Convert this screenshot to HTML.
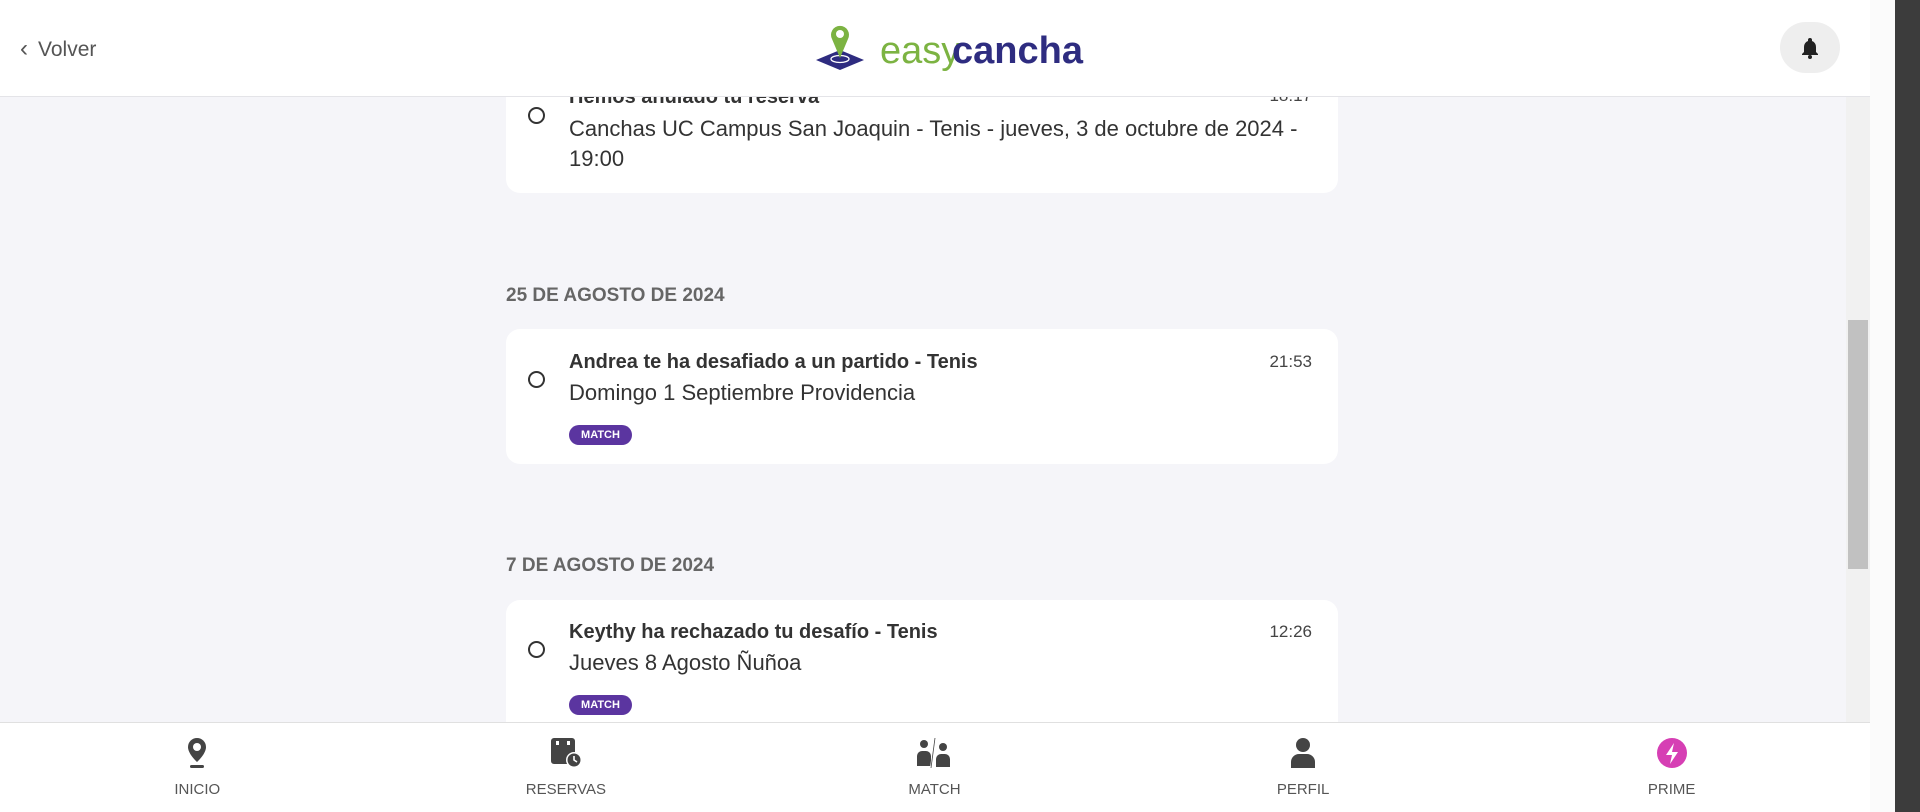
<!DOCTYPE html>
<html><head><meta charset="utf-8"><style>
*{margin:0;padding:0;box-sizing:border-box}
body{width:1920px;height:812px;overflow:hidden;background:#f5f5f9;font-family:"Liberation Sans",sans-serif;color:#333;position:relative}
.hdr{position:absolute;left:0;top:0;width:1870px;height:97px;background:#fff;border-bottom:1px solid #e4e4e8;z-index:5}
.back{position:absolute;left:20px;top:35px;font-size:21px;color:#555}
.bell{position:absolute;left:1780px;top:22px;width:60px;height:51px;border-radius:26px;background:#eee}
.card{position:absolute;left:506px;width:832px;background:#fff;border-radius:14px}
.rad{position:absolute;left:528px;width:17px;height:17px;border:2.5px solid #333;border-radius:50%}
.t{position:absolute;left:569px;font-size:20px;font-weight:bold;color:#333}
.b{position:absolute;left:569px;font-size:22px;color:#333;line-height:30px}
.tm{position:absolute;left:1266px;width:46px;text-align:right;font-size:17px;color:#444}
.badge{position:absolute;left:569px;width:63px;height:20px;border-radius:10px;background:#5b35a0;color:#fff;font-size:11px;font-weight:bold;text-align:center;line-height:20px}
.dh{position:absolute;left:506px;font-size:19px;font-weight:bold;color:#666}
.navbg{position:absolute;left:0;top:722px;width:1870px;height:90px;background:#fff;border-top:1px solid #e0e0e0;z-index:5}
.nav{position:absolute;left:13px;top:722px;width:1843px;height:90px;display:flex;z-index:6}
.nav div{flex:1;text-align:center;font-size:15px;color:#555;padding-top:14px}
.nav svg{display:block;margin:0 auto 11px}
.sb{position:absolute;left:1846px;top:97px;width:24px;height:625px;background:#f1f1f1}
.thumb{position:absolute;left:1848px;top:320px;width:20px;height:249px;background:#c1c1c1}
.sb2{position:absolute;left:1870px;top:0;width:25px;height:812px;background:#fbfbfb}
.dark{position:absolute;left:1895px;top:0;width:25px;height:812px;background:#3c3c3c}
</style></head><body>
<div class="hdr">
<div class="back"><span style="font-size:24px;margin-right:10px">&#8249;</span>Volver</div>
<svg style="position:absolute;left:816px;top:22px" width="274" height="50" viewBox="0 0 274 50">
<polygon points="0,38 24,28 48,38 24,48" fill="#2e2c80"/>
<ellipse cx="24" cy="37" rx="9" ry="3.5" fill="none" stroke="#fff" stroke-width="1.3"/>
<path d="M24 36 L16 17 A9 9 0 1 1 32 17 Z" fill="#7cb342"/>
<circle cx="24" cy="12" r="4" fill="#fff"/>
<text x="64" y="41" font-family="Liberation Sans" font-size="38" fill="#7cb342">easy</text>
<text x="136" y="41" font-family="Liberation Sans" font-size="38" font-weight="bold" fill="#2e2c80">cancha</text>
</svg>
<div class="bell"><svg style="position:absolute;left:20px;top:15px" width="20" height="22" viewBox="0 0 20 22"><path d="M10 1a2 2 0 0 1 2 2v1a6 6 0 0 1 4 6v5l2 2v1H2v-1l2-2v-5a6 6 0 0 1 4-6V3a2 2 0 0 1 2-2z" fill="#222"/><circle cx="10" cy="20" r="2" fill="#222"/></svg></div>
</div>

<div class="card" style="top:60px;height:133px"></div>
<div class="t" style="top:86px">Hemos anulado tu reserva</div>
<div class="tm" style="top:86px">18:17</div>
<div class="rad" style="top:107px"></div>
<div class="b" style="top:114px">Canchas UC Campus San Joaquin - Tenis - jueves, 3 de octubre de 2024 -<br>19:00</div>

<div class="dh" style="top:285px">25 DE AGOSTO DE 2024</div>
<div class="card" style="top:329px;height:135px"></div>
<div class="t" style="top:351px">Andrea te ha desafiado a un partido - Tenis</div>
<div class="tm" style="top:352px">21:53</div>
<div class="rad" style="top:371px"></div>
<div class="b" style="top:378px">Domingo 1 Septiembre Providencia</div>
<div class="badge" style="top:425px">MATCH</div>

<div class="dh" style="top:555px">7 DE AGOSTO DE 2024</div>
<div class="card" style="top:600px;height:135px"></div>
<div class="t" style="top:621px">Keythy ha rechazado tu desafío - Tenis</div>
<div class="tm" style="top:622px">12:26</div>
<div class="rad" style="top:641px"></div>
<div class="b" style="top:648px">Jueves 8 Agosto Ñuñoa</div>
<div class="badge" style="top:695px">MATCH</div>

<div class="sb"></div><div class="thumb"></div>
<div class="sb2"></div><div class="dark"></div>

<div class="navbg"></div>
<div class="nav">
<div><svg width="30" height="34" viewBox="0 0 30 34"><path d="M15 2a9 9 0 0 0-9 9c0 7 9 15 9 15s9-8 9-15a9 9 0 0 0-9-9z" fill="#444"/><circle cx="15" cy="11" r="4" fill="#fff"/><rect x="8" y="29" width="14" height="3" rx="1.5" fill="#444"/></svg>INICIO</div>
<div><svg width="36" height="34" viewBox="0 0 36 34"><rect x="3" y="2" width="24" height="26" rx="3" fill="#444"/><rect x="8" y="5" width="3" height="4" fill="#fff"/><rect x="19" y="5" width="3" height="4" fill="#fff"/><circle cx="26" cy="24" r="8" fill="#fff"/><circle cx="26" cy="24" r="6.5" fill="#444"/><path d="M26 20v4l3 2" stroke="#fff" stroke-width="1.6" fill="none"/></svg>RESERVAS</div>
<div><svg width="40" height="34" viewBox="0 0 40 34"><circle cx="10" cy="8" r="4" fill="#444"/><path d="M3 30v-10a5 5 0 0 1 5-5h4a5 5 0 0 1 5 5v10z" fill="#444"/><circle cx="29" cy="11" r="4" fill="#444"/><path d="M22 31v-8a5 5 0 0 1 5-5h4a5 5 0 0 1 5 5v8z" fill="#444"/><path d="M21 2L17 32" stroke="#fff" stroke-width="2"/><path d="M21 2L17 32" stroke="#444" stroke-width="0.8"/></svg>MATCH</div>
<div><svg width="30" height="34" viewBox="0 0 30 34"><circle cx="15" cy="9" r="7" fill="#444"/><path d="M3 32v-6a8 8 0 0 1 8-8h8a8 8 0 0 1 8 8v6z" fill="#444"/></svg>PERFIL</div>
<div><svg width="34" height="34" viewBox="0 0 34 34"><circle cx="17" cy="17" r="15" fill="#d63fb4"/><path d="M19 7l-8 12h6l-2 9 8-12h-6z" fill="#fff"/></svg>PRIME</div>
</div>
</body></html>
